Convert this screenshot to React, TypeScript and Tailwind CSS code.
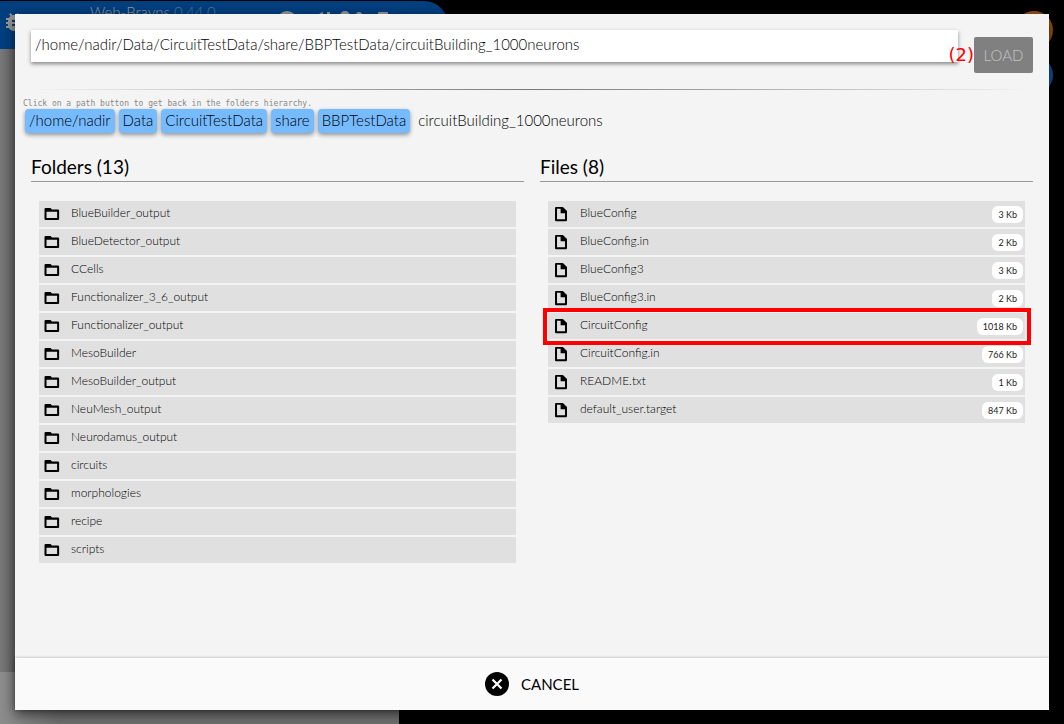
import { useState } from "react";

const crumbs = ["/home/nadir", "Data", "CircuitTestData", "share", "BBPTestData"];

const folders = [
  "BlueBuilder_output",
  "BlueDetector_output",
  "CCells",
  "Functionalizer_3_6_output",
  "Functionalizer_output",
  "MesoBuilder",
  "MesoBuilder_output",
  "NeuMesh_output",
  "Neurodamus_output",
  "circuits",
  "morphologies",
  "recipe",
  "scripts",
];

const files = [
  { name: "BlueConfig", size: "3 Kb" },
  { name: "BlueConfig.in", size: "2 Kb" },
  { name: "BlueConfig3", size: "3 Kb" },
  { name: "BlueConfig3.in", size: "2 Kb" },
  { name: "CircuitConfig", size: "1018 Kb", marked: true },
  { name: "CircuitConfig.in", size: "766 Kb" },
  { name: "README.txt", size: "1 Kb" },
  { name: "default_user.target", size: "847 Kb" },
];

function FolderIcon() {
  return (
    <svg viewBox="0 0 24 24" className="size-[18px] shrink-0" fill="#000" aria-hidden="true">
      <path fillRule="evenodd" d="M3 4H10L12 6H20.500L21.500 7V19L20.500 20H3L2 19V5ZM4.700 9V17.300H18.800V9Z" />
    </svg>
  );
}

function FileIcon() {
  return (
    <svg viewBox="0 0 24 24" className="size-[18px] shrink-0" fill="#000" aria-hidden="true">
      <path fillRule="evenodd" d="M5 2.500H14.500L20 8V20.500L19 21.500H5L4 20.500V3.500ZM6.700 5V19H17.300V11H11.500V5Z" />
    </svg>
  );
}

function Backdrop() {
  return (
    <div aria-hidden="true" className="absolute inset-0 overflow-hidden bg-black">
      <div className="flex h-full w-[399px] flex-col pt-[49px]">
        <div className="grow bg-linear-to-r from-[#797979] to-[#606060] to-5%" />
        <div className="h-[52px] bg-linear-to-r from-[#8d8d8d] to-[#707070] to-15%" />
      </div>
      <div className="absolute top-px left-0 flex h-12 w-[448px] items-start rounded-tr-[24px] bg-[#003f7f] text-[#999]">
        <svg viewBox="0 0 24 24" className="mt-[9px] ml-[2px] size-6 shrink-0" fill="currentColor">
          <path d="M14 12H10V10H14M14 16H10V14H14M20 8H17.190C16.740 7.220 16.120 6.550 15.370 6.040L17 4.410L15.590 3L13.420 5.170C12.960 5.060 12.490 5 12 5S11.050 5.060 10.590 5.170L8.410 3L7 4.410L8.620 6.040C7.880 6.550 7.260 7.220 6.810 8H4V10H6.090C6.040 10.330 6 10.660 6 11V12H4V14H6V15C6 15.340 6.040 15.670 6.090 16H4V18H6.810C7.850 19.790 9.780 21 12 21S16.150 19.790 17.190 18H20V16H17.910C17.960 15.670 18 15.340 18 15V14H20V12H18V11C18 10.660 17.960 10.330 17.910 10H20V8Z" />
        </svg>
        <div className="ml-16 w-[180px] text-[15px] font-light whitespace-nowrap">
          Web-Brayns <span className="text-[#55779a]">0.44.0</span>
        </div>
        <svg viewBox="0 0 115 20" className="mt-[9px] ml-1 h-5 w-[115px] shrink-0" fill="currentColor">
          <circle cx="13" cy="11" r="10" />
          <path d="M45 4L49 2V17H45ZM53 2h3v15h-3zM46 3l3-1v3z" />
          <circle cx="71" cy="6" r="5" />
          <circle cx="85" cy="5" r="3" />
          <rect x="104" y="2" width="10" height="14" rx="1" />
        </svg>
      </div>
      <div className="absolute top-[11px] right-[11px] size-[38px] rounded-full bg-[#995213]" />
      <div className="absolute top-[56px] right-[11px] size-[38px] rounded-full bg-[#135299]" />
    </div>
  );
}

export default function App() {
  const [path, setPath] = useState("/home/nadir/Data/CircuitTestData/share/BBPTestData/circuitBuilding_1000neurons");

  return (
    <div className="relative flex min-h-screen font-['Lato','Open_Sans',sans-serif] text-black">
      <Backdrop />
      <main
        role="dialog"
        aria-label="Load a circuit"
        className="relative mx-[15px] my-[14px] flex grow flex-col bg-[#f4f4f4] shadow-[0_4px_12px_rgba(0,0,0,0.6)]"
      >
        <section className="grow">
          <form className="flex items-start gap-4 px-4 pt-4" onSubmit={(e) => e.preventDefault()}>
            <input
              aria-label="Path"
              value={path}
              onChange={(e) => setPath(e.target.value)}
              className="h-8 min-w-0 grow bg-white px-1 pb-1 text-[15px] font-light shadow-[0_2px_4px_rgba(0,0,0,0.45)] outline-none"
            />
            <div className="relative mt-[7px]">
              <button
                type="submit"
                disabled
                className="h-9 w-[59px] rounded-xs bg-[#808080] text-[15px] font-light text-[#c4c4c4]"
              >
                LOAD
              </button>
              <span className="absolute top-1/2 right-full -translate-y-1/2 font-['DejaVu_Sans',sans-serif] text-lg text-[#ff0000]">
                (2)
              </span>
            </div>
          </form>

          <div className="mx-4 mt-4 h-px bg-linear-to-r from-transparent via-[#777] to-transparent" />

          <nav aria-label="Folders hierarchy" className="px-2 pt-2">
            <p className="font-['DejaVu_Sans_Mono',monospace] text-[8px] leading-[11px] text-[#888]">
              Click on a path button to get back in the folders hierarchy.
            </p>
            <div className="flex items-center gap-1 px-[2px] text-[15px] font-light">
              {crumbs.map((crumb) => (
                <button
                  key={crumb}
                  type="button"
                  className="h-6 rounded-sm bg-[#77bbff] px-1 pb-[2px] leading-[22px] shadow-[0_2px_4px_rgba(0,0,0,0.4)]"
                >
                  {crumb}
                </button>
              ))}
              <span className="px-1 pb-[2px] leading-[22px]">circuitBuilding_1000neurons</span>
            </div>
          </nav>

          <div className="grid grid-cols-2 gap-4 px-4 pt-5">
            <section>
              <h2 className="border-b border-[#999] text-[19px] leading-7">Folders (13)</h2>
              <ul className="mt-[19px] flex flex-col gap-[2px] px-2">
                {folders.map((name) => (
                  <li key={name}>
                    <button
                      type="button"
                      className="flex h-[26px] w-full items-center gap-[10px] bg-[#e0e0e0] px-1 text-left text-xs font-light text-black"
                    >
                      <FolderIcon />
                      <span className="pb-[2px]">{name}</span>
                    </button>
                  </li>
                ))}
              </ul>
            </section>

            <section>
              <h2 className="border-b border-[#999] text-[19px] leading-7">Files (8)</h2>
              <ul className="mt-[19px] flex flex-col gap-[2px] px-2">
                {files.map((file) => (
                  <li key={file.name} className="relative">
                    <button
                      type="button"
                      className="flex h-[26px] w-full items-center gap-[10px] bg-[#e0e0e0] pr-[2px] pl-1 text-left text-xs font-light text-black"
                    >
                      <FileIcon />
                      <span className="grow pb-[2px]">{file.name}</span>
                      <span className="rounded-md bg-white px-[6px] text-[9px] leading-[17px] font-normal text-[#222]">
                        {file.size}
                      </span>
                    </button>
                    {file.marked && (
                      <span className="pointer-events-none absolute -top-[5px] -right-[6px] -bottom-[6px] -left-[5px] z-10 border-4 border-[#ff0000]" />
                    )}
                  </li>
                ))}
              </ul>
            </section>
          </div>
        </section>

        <footer className="flex h-[52px] items-center justify-center bg-[#fafafa] shadow-[0_0_3px_rgba(0,0,0,0.3)]">
          <button type="button" className="flex items-center gap-3 text-[15px]">
            <svg viewBox="0 0 24 24" className="size-6" aria-hidden="true">
              <circle cx="12" cy="12" r="12" />
              <path d="M7.500 7.500L16.500 16.500M16.500 7.500L7.500 16.500" stroke="#fff" strokeWidth="2.200" />
            </svg>
            CANCEL
          </button>
        </footer>
      </main>
    </div>
  );
}
